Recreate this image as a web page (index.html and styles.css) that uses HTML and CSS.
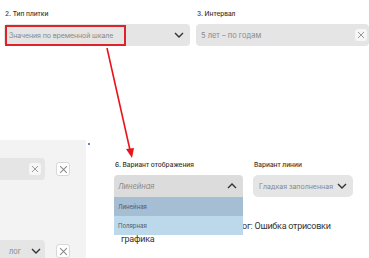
FILE: index.html
```html
<!DOCTYPE html>
<html lang="ru">
<head>
    <meta charset="UTF-8">
    <title>Настройки плитки</title>
    <link rel="stylesheet" href="styles.css">
</head>
<body>
    <div class="top">
        <div class="field type-field">
            <div class="label">2. Тип плитки</div>
            <div class="select">
                <span class="value marked">Значения по временной шкале</span>
                <svg class="chev" width="10" height="6" viewBox="0 0 10 6"><path d="M1 1l4 4 4-4" fill="none" stroke="#333" stroke-width="1.4"/></svg>
            </div>
        </div>
        <div class="field interval-field">
            <div class="label">3. Интервал</div>
            <div class="select">
                <span class="value">5 лет – по годам</span>
                <span class="clear"><svg width="8" height="8" viewBox="0 0 8 8"><path d="M1 1l6 6M7 1L1 7" stroke="#999" stroke-width="1"/></svg></span>
            </div>
        </div>
    </div>

    <div class="bottom">
        <div class="panel">
            <div class="panel-row first">
                <div class="input">
                    <span class="clear"><svg width="8" height="8" viewBox="0 0 8 8"><path d="M1 1l6 6M7 1L1 7" stroke="#999" stroke-width="1"/></svg></span>
                </div>
                <button class="x-btn"><svg width="9" height="9" viewBox="0 0 8 8"><path d="M1 1l6 6M7 1L1 7" stroke="#888" stroke-width="0.9"/></svg></button>
            </div>
            <div class="panel-row second">
                <div class="input">
                    <span class="value">лог</span>
                    <svg class="chev" width="10" height="6" viewBox="0 0 10 6"><path d="M1 1l4 4 4-4" fill="none" stroke="#333" stroke-width="1.4"/></svg>
                </div>
                <button class="x-btn"><svg width="9" height="9" viewBox="0 0 8 8"><path d="M1 1l6 6M7 1L1 7" stroke="#888" stroke-width="0.9"/></svg></button>
            </div>
        </div>
        <div class="gutter"><span class="dot"></span></div>
        <div class="content">
            <div class="fields">
                <div class="field view-field">
                    <div class="label">6. Вариант отображения</div>
                    <div class="select open">
                        <span class="value">Линейная</span>
                        <svg class="chev" width="10" height="6" viewBox="0 0 10 6"><path d="M1 5l4-4 4 4" fill="none" stroke="#333" stroke-width="1.4"/></svg>
                    </div>
                    <ul class="options">
                        <li class="active">Линейная</li>
                        <li>Полярная</li>
                    </ul>
                </div>
                <div class="field line-field">
                    <div class="label">Вариант линии</div>
                    <div class="select">
                        <span class="value">Гладкая заполненная</span>
                        <svg class="chev" width="10" height="6" viewBox="0 0 10 6"><path d="M1 1l4 4 4-4" fill="none" stroke="#333" stroke-width="1.4"/></svg>
                    </div>
                </div>
            </div>
            <p class="error">Ошибка при построении, диалог: Ошибка отрисовки графика</p>
        </div>
    </div>

    <svg class="arrow" width="369" height="258" viewBox="0 0 369 258">
        <path d="M107 48L130 150" stroke="#e8141c" stroke-width="1.6"/>
        <path d="M126 149l6 9 2-10z" fill="#e8141c"/>
    </svg>
</body>
</html>
```

FILE: styles.css
```css
body {
    margin: 0;
    width: 369px;
    height: 258px;
    overflow: hidden;
    background: #fff;
    font-family: Inter, "Noto Sans", sans-serif;
    color: #333;
    position: relative;
}
.top {
    display: flex;
    gap: 6px;
    padding: 9px 0 0 4px;
}
.label {
    font-size: 6.5px;
    font-weight: 500;
    color: #333;
    height: 15px;
    line-height: 10px;
    padding-left: 1px;
    white-space: nowrap;
}
.select {
    display: flex;
    align-items: center;
    justify-content: space-between;
    height: 22px;
    background: #e5e5e5;
    border-radius: 4px;
    padding: 0 6px 0 4px;
    box-sizing: border-box;
}
.value {
    font-size: 7.5px;
    color: #8a8a8a;
    white-space: nowrap;
}
.marked {
    border: 2px solid #e0222a;
    padding: 4px 2px;
    margin-left: -3px;
    width: 113px;
    font-size: 7px;
    letter-spacing: -0.1px;
}
.chev {
    flex-shrink: 0;
}
.type-field {
    width: 186px;
}
.interval-field {
    flex: 1;
}
.interval-field .value {
    padding-left: 1px;
}
.clear {
    width: 12px;
    height: 12px;
    border-radius: 3px;
    background: #f6f6f6;
    display: flex;
    align-items: center;
    justify-content: center;
}
.interval-field .select {
    padding-right: 2px;
}

.bottom {
    display: flex;
    margin-top: 94px;
    height: 118px;
}
.panel {
    width: 85px;
    background: #f3f3f3;
    flex-shrink: 0;
}
.panel-row {
    display: flex;
    align-items: center;
    gap: 11px;
}
.panel-row.first {
    margin-top: 18px;
}
.panel-row.second {
    margin-top: 60px;
}
.panel .input {
    width: 45px;
    height: 22px;
    background: #e5e5e5;
    border-radius: 0 4px 4px 0;
    display: flex;
    align-items: center;
    justify-content: flex-end;
    padding-right: 4px;
    box-sizing: border-box;
    gap: 10px;
}
.x-btn {
    width: 14px;
    height: 14px;
    padding: 0;
    border: 1px solid #d8d8d8;
    border-radius: 3px;
    background: #fff;
    display: flex;
    align-items: center;
    justify-content: center;
}
.gutter {
    width: 28px;
    flex-shrink: 0;
    border-left: 1px solid #fbf3ea;
}
.dot {
    display: block;
    width: 2px;
    height: 2px;
    background: #6a86a8;
    margin: 3px 0 0 2px;
}
.content {
    flex: 1;
    padding-top: 20px;
}
.fields {
    display: flex;
    gap: 10px;
}
.view-field {
    width: 129px;
    position: relative;
}
.view-field .select {
    background: #dcdcdc;
    border-radius: 4px 4px 0 0;
}
.view-field .value {
    font-style: italic;
}
.options {
    list-style: none;
    margin: 0;
    padding: 0;
    position: absolute;
    left: 0;
    right: 0;
    top: 37px;
    z-index: 2;
}
.options li {
    height: 19px;
    line-height: 19px;
    padding-left: 4px;
    font-size: 6px;
    color: #4b5b70;
    background: #bcd9ec;
}
.options li.active {
    background: #a6bed4;
}
.line-field {
    width: 100px;
}
.line-field .select {
    border-radius: 5px;
    padding-left: 6px;
}
.line-field .value {
    font-size: 7px;
}
.error {
    margin: 23px 0 0 7px;
    width: 216px;
    font-family: Roboto, "Noto Sans", sans-serif;
    font-size: 9px;
    letter-spacing: -0.25px;
    line-height: 13px;
    color: #333;
}
.arrow {
    position: absolute;
    left: 0;
    top: 0;
    pointer-events: none;
    z-index: 5;
}
```
